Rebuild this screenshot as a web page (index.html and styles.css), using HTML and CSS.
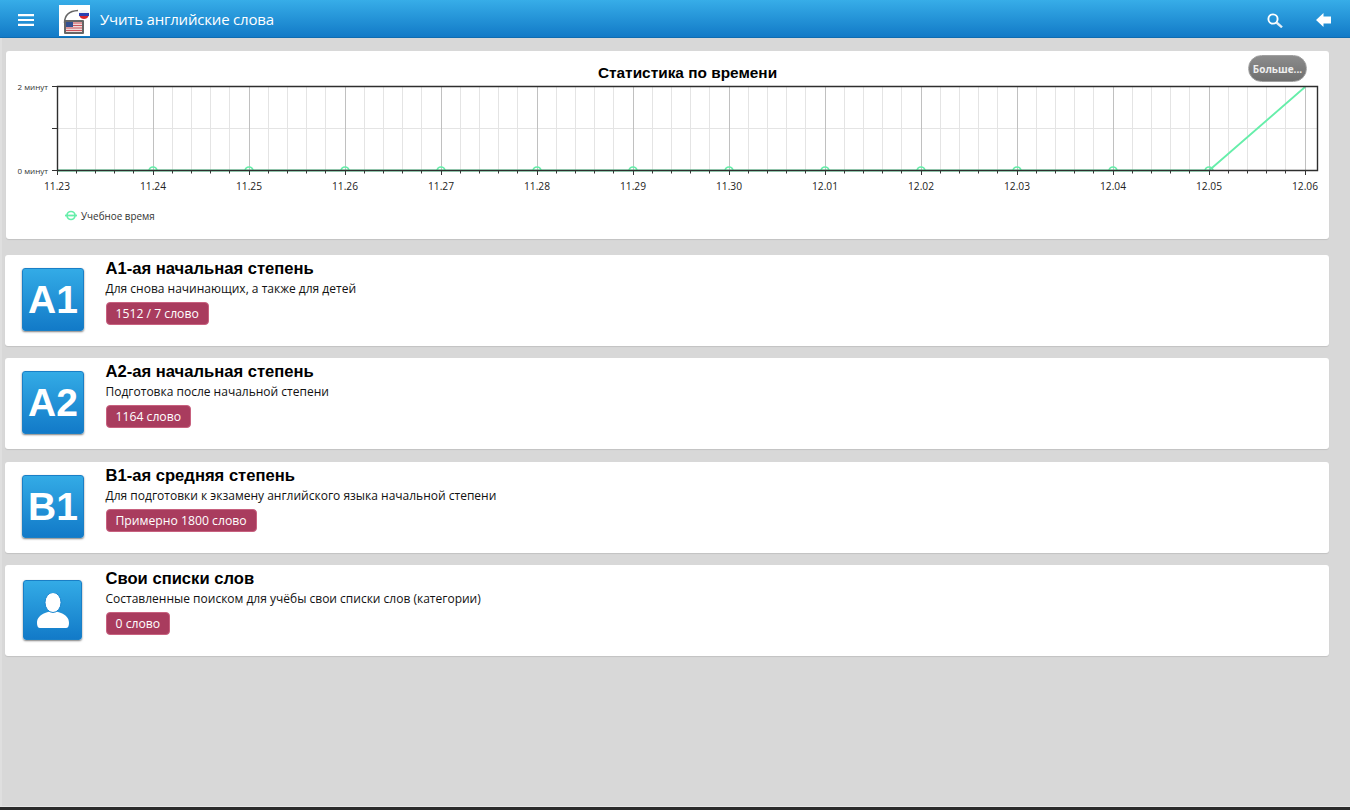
FILE: index.html
```html
<!DOCTYPE html>
<html lang="ru">
<head>
<meta charset="utf-8">
<title>Учить английские слова</title>
<link rel="stylesheet" href="styles.css">
</head>
<body>
<div class="app">
  <header class="topbar">
    <svg class="menu-icon" width="16" height="12" viewBox="0 0 16 12"><path d="M0 1.100h16M0 6h16M0 10.900h16" stroke="#fff" stroke-width="2.200" fill="none"/></svg>
    <div class="logo">
      <svg width="31" height="31" viewBox="0 0 31 31">
        <rect width="31" height="31" fill="#fff"/>
        <path d="M5.500 18C5.500 10 10 6 19 5.500" stroke="#666" stroke-width="1.500" fill="none"/>
        <path d="M20 9c0-3 2-4 5-4s5 1 5 4z" fill="#f1f1f4"/>
        <rect x="20" y="8" width="10" height="3" fill="#2c3fb0"/>
        <path d="M20.500 11h9c-.5 2-2.500 3-4.500 3s-4-1-4.500-3z" fill="#d9252c"/>
        <rect x="5" y="15" width="20" height="14" rx="1" fill="#666"/>
        <rect x="7" y="17" width="16" height="10" fill="#eed9d9"/>
        <path d="M7 18h16M7 20.500h16M7 23h16M7 25.500h16" stroke="#c9525a" stroke-width="1.200"/>
        <rect x="7" y="17" width="7" height="5" fill="#34508f"/>
      </svg>
    </div>
    <h1 class="app-title">Учить английские слова</h1>
    <div class="topbar-actions">
      <svg width="16" height="15" viewBox="0 0 16 15"><circle cx="6" cy="6" r="4.600" fill="none" stroke="#fff" stroke-width="1.900"/><path d="M9.500 9.500l5.500 4.800" stroke="#e4eef6" stroke-width="2.400"/></svg>
      <svg width="15" height="14" viewBox="0 0 15 14"><path d="M0 7 7.500 0v3.500H15v7H7.500V14z" fill="#fff"/></svg>
    </div>
  </header>

  <main class="content">
    <section class="card chart-card">
      <svg class="chart" width="1323" height="188" viewBox="6 51 1323 188">
        <defs>
          <clipPath id="above-axis"><rect x="40" y="80" width="1290" height="90"/></clipPath>
        </defs>
        <path class="grid-minor" d="M57 128.500H1317"/>
        <g id="gridlines" class="grid-minor"></g>
        <g id="gridmajor" class="grid-major"></g>
        <path class="series" d="M57 170.500H1209L1305 87"/>
        <g id="dots" clip-path="url(#above-axis)"></g>
        <path class="frame" d="M57.500 86.500H1317.500V170.500H57.500Z"/>
        <path class="tick" d="M52 86.500h5M52 128.500h5M52 170.500h5"/>
        <g id="ticks" class="tick"></g>
        <text class="y-label" x="48" y="90">2 минут</text>
        <text class="y-label" x="48" y="174">0 минут</text>
        <text class="chart-title" x="687.500" y="78">Статистика по времени</text>
        <g id="labels" class="x-labels"></g>
        <path class="series" d="M65 215.500h12"/>
        <circle class="dot" cx="71" cy="215.500" r="4"/>
        <text class="legend" x="81" y="219.500">Учебное время</text>
      </svg>
      <button class="more-btn">Больше...</button>
    </section>

    <section class="card level">
      <div class="tile"><span>A1</span></div>
      <div class="level-body">
        <h2>А1-ая начальная степень</h2>
        <p>Для снова начинающих, а также для детей</p>
        <span class="badge">1512 / 7 слово</span>
      </div>
    </section>
    <section class="card level">
      <div class="tile"><span>A2</span></div>
      <div class="level-body">
        <h2>А2-ая начальная степень</h2>
        <p>Подготовка после начальной степени</p>
        <span class="badge">1164 слово</span>
      </div>
    </section>
    <section class="card level">
      <div class="tile"><span>B1</span></div>
      <div class="level-body">
        <h2>В1-ая средняя степень</h2>
        <p>Для подготовки к экзамену английского языка начальной степени</p>
        <span class="badge">Примерно 1800 слово</span>
      </div>
    </section>
    <section class="card level">
      <div class="tile tile-user">
        <svg width="32" height="35" viewBox="0 0 32 35">
          <path d="M0 30c0-5 3-8 8-10 3-1 5-2 8-2s5 1 8 2c5 2 8 5 8 10 0 3-1 5-3 5H3c-2 0-3-2-3-5z" fill="#fff"/>
          <ellipse cx="16" cy="9.500" rx="8" ry="10" fill="#fff" stroke="#1c87d0" stroke-width="1"/>
        </svg>
      </div>
      <div class="level-body">
        <h2>Свои списки слов</h2>
        <p>Составленные поиском для учёбы свои списки слов (категории)</p>
        <span class="badge">0 слово</span>
      </div>
    </section>
  </main>
</div>
<script src="chart.js"></script>
</body>
</html>
```

FILE: chart.js
```js
var NS = "http://www.w3.org/2000/svg";
var dates = ["11.23","11.24","11.25","11.26","11.27","11.28","11.29","11.30","12.01","12.02","12.03","12.04","12.05","12.06"];
var minor = "", major = "", ticks = "";
for (var i = 0; i <= 65; i++) {
  var x = Math.floor(57 + i * 19.2) + 0.5;
  if (i % 5 === 0) { major += "M" + x + " 87V170"; }
  else { minor += "M" + x + " 87V170"; }
  ticks += "M" + x + " 170v" + (i % 5 === 0 ? 5 : 3.5);
}
function addPath(id, d) {
  var p = document.createElementNS(NS, "path");
  p.setAttribute("d", d);
  document.getElementById(id).appendChild(p);
}
addPath("gridlines", minor);
addPath("gridmajor", major);
addPath("ticks", ticks);
dates.forEach(function (label, i) {
  var x = 57 + i * 96;
  var t = document.createElementNS(NS, "text");
  t.setAttribute("x", x);
  t.setAttribute("y", 190);
  t.textContent = label;
  document.getElementById("labels").appendChild(t);
  if (i > 0 && i < 13) {
    var c = document.createElementNS(NS, "circle");
    c.setAttribute("cx", x);
    c.setAttribute("cy", 171);
    c.setAttribute("r", 4);
    c.setAttribute("class", "dot");
    document.getElementById("dots").appendChild(c);
  }
});
```

FILE: styles.css
```css
* { box-sizing: border-box; }
html, body { margin: 0; height: 100%; }
body {
  background: #d8d8d8;
  font-family: "Open Sans", "Noto Sans", sans-serif;
  color: #111;
  overflow: hidden;
}
.app {
  height: 810px;
  display: flex;
  flex-direction: column;
  border-bottom: 3px solid #2b2b2b;
  box-shadow: inset 0 -1px #e6e6e6, inset 2px 0 #dfdfdf;
}
.topbar {
  height: 38px;
  flex: none;
  display: flex;
  align-items: center;
  padding: 0 19px 0 18px;
  background: linear-gradient(#37ade8, #127ac7);
  border-bottom: 1px solid #0f6cb0;
  color: #fff;
}
.menu-icon { flex: none; margin: 2px 25px 0 0; }
.logo { width: 31px; height: 31px; flex: none; margin: 3px 10px 0 0; }
.logo svg { display: block; }
.app-title { margin: 0; font-size: 15px; font-weight: 400; letter-spacing: -.2px; color: #fff; }
.topbar-actions { margin-left: auto; display: flex; align-items: center; gap: 33px; padding-top: 3px; }
.topbar-actions svg { display: block; }
.content {
  padding: 13px 21px 0 5px;
  display: flex;
  flex-direction: column;
  gap: 12.330px;
}
.card {
  background: #fff;
  border-radius: 3px;
  box-shadow: 0 1px 1px rgba(0,0,0,.1);
}
.chart-card {
  position: relative;
  width: 1323px;
  height: 188px;
  margin: 0 0 3.670px 1px;
}
.chart { display: block; }
.grid-minor path, path.grid-minor { stroke: #e4e4e4; stroke-width: 1; fill: none; }
.grid-major path { stroke: #c0c0c0; stroke-width: 1; fill: none; }
.frame { stroke: #2e2e2e; stroke-width: 1.400; fill: none; }
.tick, .tick path { stroke: #333; stroke-width: 1; fill: none; }
.y-label { font-size: 8px; text-anchor: end; fill: #333; }
.chart-title { font: 700 15.400px "Liberation Sans", Arial, sans-serif; text-anchor: middle; fill: #000; }
.x-labels text { font-size: 10.200px; text-anchor: middle; fill: #222; }
.series { stroke: #66eeaa; stroke-width: 1.800; fill: none; }
.dot { stroke: #66eeaa; stroke-width: 1.700; fill: none; }
.legend { font-size: 9.900px; fill: #333; }
.more-btn {
  position: absolute;
  top: 4px;
  right: 22px;
  width: 59px;
  height: 27px;
  padding: 0;
  border: 1px solid #a0a0a0;
  border-radius: 14px;
  background: linear-gradient(#8c8c8c, #6f6f6f);
  color: #eee;
  font: 700 10px "Open Sans", sans-serif;
}
.level {
  width: 1324px;
  height: 91px;
  display: flex;
  padding-left: 17px;
}
.tile {
  width: 62px;
  height: 63px;
  margin-top: 13px;
  padding-top: 1px;
  flex: none;
  display: flex;
  align-items: center;
  justify-content: center;
  border: 1px solid #1a7fc6;
  border-radius: 3px;
  background: linear-gradient(#33abe6, #127ac8);
  box-shadow: 0 1px 2px rgba(0,0,0,.5);
  color: #fff;
  font: 700 39px "Liberation Sans", Arial, sans-serif;
}
.tile-user { width: 59px; height: 60px; margin: 15px 2px 0 1px; padding-top: 0; align-items: flex-end; padding-bottom: 11px; }
.level-body { margin-left: 21.500px; padding-top: 4px; }
.level-body h2 { margin: 0; font: 700 16.600px/20px "Liberation Sans", Arial, sans-serif; color: #000; }
.level-body p { margin: 1px 0 4px; font-size: 12px; line-height: 18px; color: #111; }
.badge {
  display: block;
  width: fit-content;
  height: 23px;
  padding: 0 9px;
  border: 1px solid #c8617f;
  border-radius: 4px;
  background: #a93c5e;
  color: #fff;
  font-size: 12.200px;
  line-height: 21px;
}
```
